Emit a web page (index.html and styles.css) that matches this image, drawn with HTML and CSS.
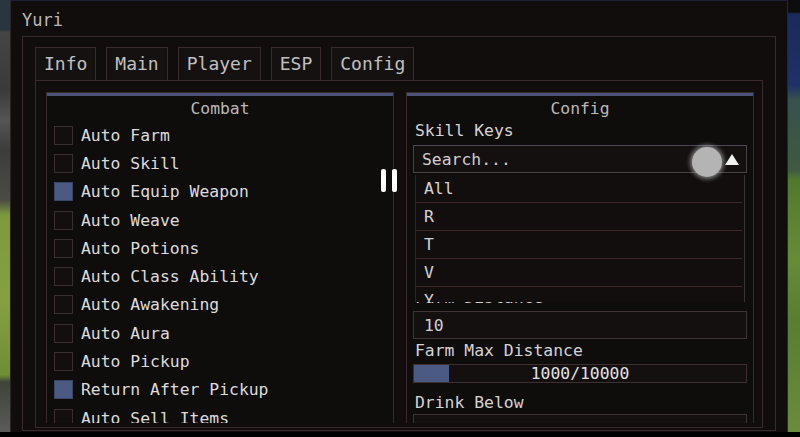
FILE: index.html
```html
<!DOCTYPE html>
<html lang="en">
<head>
  <meta charset="UTF-8" />
  <meta name="viewport" content="width=device-width, initial-scale=1.0" />
  <title>Yuri</title>
  <link rel="stylesheet" href="styles.css">
</head>
<body>
  <div class="screen">
    <div class="scene scene-left"></div>

    <div class="window">
      <div class="title">Yuri</div>

      <div class="frame">
        <nav class="tabs">
          <div class="tab">Info</div>
          <div class="tab">Main</div>
          <div class="tab">Player</div>
          <div class="tab">ESP</div>
          <div class="tab">Config</div>
        </nav>

        <div class="tab-body">
          <section class="panel">
            <div class="panel-head">Combat</div>
            <ul class="checks">
              <li><span class="box"></span>Auto Farm</li>
              <li><span class="box"></span>Auto Skill</li>
              <li><span class="box on"></span>Auto Equip Weapon</li>
              <li><span class="box"></span>Auto Weave</li>
              <li><span class="box"></span>Auto Potions</li>
              <li><span class="box"></span>Auto Class Ability</li>
              <li><span class="box"></span>Auto Awakening</li>
              <li><span class="box"></span>Auto Aura</li>
              <li><span class="box"></span>Auto Pickup</li>
              <li><span class="box on"></span>Return After Pickup</li>
              <li><span class="box"></span>Auto Sell Items</li>
            </ul>
          </section>

          <section class="panel">
            <div class="panel-head">Config</div>
            <div class="fields">
              <div class="label first">Skill Keys</div>
              <div class="input search">
                <span>Search...</span>
                <svg class="arrow" width="14" height="11" viewBox="0 0 14 11"><path d="M0 11 L7 0 L14 11 Z" fill="#f2f2f2"/></svg>
              </div>
              <div class="spacer"></div>
              <div class="label">Farm Distance</div>
              <div class="input num">10</div>
              <div class="label tight">Farm Max Distance</div>
              <div class="slider">
                <div class="fill" style="width:10.6%"></div>
                <span>1000/10000</span>
              </div>
              <div class="label wide">Drink Below</div>
              <div class="input below"></div>
            </div>

            <ul class="dropdown">
              <li>All</li>
              <li>R</li>
              <li>T</li>
              <li>V</li>
              <li>Y</li>
            </ul>
          </section>
        </div>
      </div>
    </div>

    <div class="scene scene-right"></div>
  </div>

  <!-- screen recorder overlays -->
  <div class="pause"><i></i><i></i></div>
  <div class="touch"></div>
</body>
</html>
```

FILE: styles.css
```css
:root{
  --bg:#110d0d;
  --panel:#0f0c0c;
  --line:#3a2b2b;
  --line-soft:#2c2626;
  --blue:#4a5a82;
  --text:#dcdcdc;
  --dim:#b9b9b9;
}
*{box-sizing:border-box}
body{margin:0;height:437px;overflow:hidden;background:#000;font-family:'DejaVu Sans Mono','Liberation Mono',monospace;font-size:16.4px;color:var(--text)}
ul{list-style:none;margin:0;padding:0}

.screen{display:flex;height:432px}
.scene-left{width:10px;background:linear-gradient(#2b3540 0,#2b3540 30px,#454545 32px,#3a3a3a 90px,#555 120px,#3c3c3c 150px,#4b4b45 200px,#7c9a3c 215px,#86a040 300px,#6f8e36 375px,#3f4438 382px,#5a5a5a 430px)}
.scene-right{width:12px;background:linear-gradient(#0d0d0d 0,#0d0d0d 12px,#1a2a5a 14px,#1d3266 85px,#35524e 100px,#3f5a40 170px,#4f7a2c 180px,#678c36 260px,#587e30 320px,#6b8c3c 437px)}

.window{flex:1;display:flex;flex-direction:column;background:var(--bg);border-left:1px solid #2a2626;border-right:1px solid #2a2626;border-top:1px solid #1d1f3a;padding:0 11px 1px 11px;overflow:hidden}
.title{height:35px;padding-top:3px;line-height:32px;font-size:17px;color:var(--dim)}

.frame{flex:1;display:flex;flex-direction:column;border:1px solid var(--line);padding:10px 12px 2px 12px;min-height:0}
.tabs{display:flex;gap:10px;height:33px}
.tab{border:1px solid var(--line);border-bottom:none;background:#151111;padding:0 8px;font-size:18px;line-height:32px;color:#c0c0c0}

.tab-body{flex:1;display:grid;grid-template-columns:1fr 1fr;gap:12px;border:1px solid var(--line);padding:11px 8px 4px 10px;min-height:0}
.panel{position:relative;border:1px solid var(--line);border-bottom:none;background:var(--panel);overflow:hidden}
.panel-head{border-top:3px solid #4b5378;height:28px;line-height:25px;text-align:center;color:var(--dim)}

.checks{padding-left:7px}
.checks li{display:flex;align-items:center;height:28.3px;white-space:nowrap}
.box{width:19px;height:19px;border:1px solid #3a2f2f;background:#130f0f;margin-right:8px;flex:none}
.box.on{background:var(--blue);border-color:#3b4666}

.fields{padding:0 6px}
.label{height:18px;line-height:18px;padding-left:2px;margin-top:4px;color:#d4d4d4;white-space:nowrap}
.label.first{margin-top:1px}
.label.tight{margin-top:3px}
.label.wide{margin-top:11px}
.input{height:28px;border:1px solid #3e3434;background:#141010;display:flex;align-items:center;padding-left:8px;color:#cfcfcf}
.input.search{margin-top:5px;border-color:#474244;border-top-color:#4a4658;justify-content:space-between;padding-right:7px}
.input.num{margin-top:4px;padding-left:10px}
.input.below{margin-top:2px}
.spacer{height:112px}
.arrow{display:block}

.slider{position:relative;margin-top:4px;height:19px;border:1px solid #3e3030;background:#141010;display:flex;align-items:center;justify-content:center;color:#e2e2e2}
.slider .fill{position:absolute;left:0;top:0;bottom:0;background:var(--blue)}
.slider span{position:relative}

.dropdown{position:absolute;left:8px;top:82px;width:330px;height:127px;background:#120e0e;border-left:1px solid var(--line-soft);border-right:1px solid #3a3434;overflow:hidden}
.dropdown li{height:28px;line-height:27px;padding-left:8px;margin-right:2px;border-bottom:1px solid #3f2828;color:#d4d4d4}

.pause{position:absolute;left:381px;top:169px;display:flex;gap:6px}
.pause i{display:block;width:5px;height:23px;background:#fff;border-radius:2px}
.touch{position:absolute;left:692px;top:147px;width:30px;height:30px;border-radius:50%;background:#b4b4b4;box-shadow:0 0 4px 2px rgba(210,210,210,.55)}
```
